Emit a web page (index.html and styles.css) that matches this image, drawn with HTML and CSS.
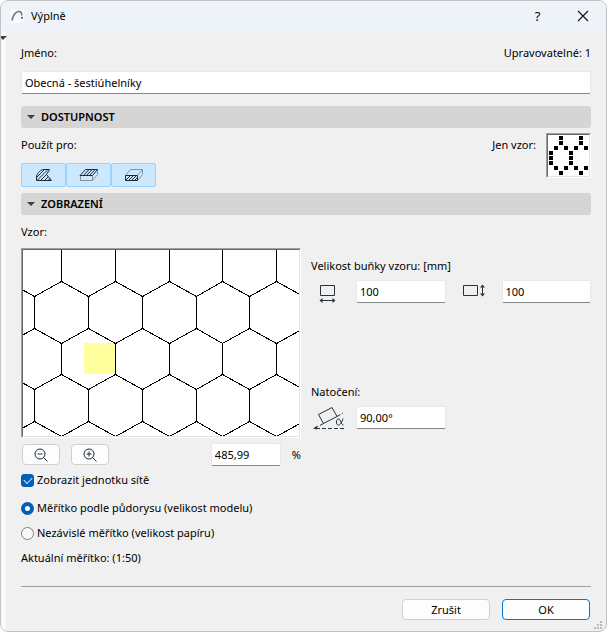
FILE: index.html
```html
<!DOCTYPE html>
<html lang="cs">
<head>
<meta charset="utf-8">
<title>Výplně</title>
<link rel="stylesheet" href="styles.css">
</head>
<body>
<div class="dialog">
  <header class="titlebar">
    <svg class="app-icon" width="14" height="14" viewBox="0 0 14 14" aria-hidden="true"><rect width="14" height="14" rx="2" fill="#fafafa"/><path d="M2 11.500C3 6.500 5.500 3 8.500 2.500c2.200-.3 3.200 1.200 3.300 4" fill="none" stroke="#73737f" stroke-width="1.600"/><circle cx="12" cy="8.800" r="1" fill="#4a4a52"/></svg>
    <h1 class="title">Výplně</h1>
    <button class="title-button help" type="button" aria-label="Nápověda">?</button>
    <button class="title-button" type="button" aria-label="Zavřít"><svg width="12" height="12" viewBox="0 0 12 12"><path d="M1 1l10 10M11 1L1 11" stroke="#111" stroke-width="1.100"/></svg></button>
  </header>
  <div class="body">
    <div class="rail"><span class="arrow rail-arrow"></span></div>
    <form class="content">
      <div class="name-row"><label for="name">Jméno:</label><span>Upravovatelné: 1</span></div>
      <input class="field" id="name" type="text" value="Obecná - šestiúhelníky">

      <button class="section" type="button"><span class="arrow"></span>DOSTUPNOST</button>
      <div class="availability">
        <div class="use-for">
          <span>Použít pro:</span>
          <div class="toggles">
            <button type="button" class="toggle" aria-label="Kreslené výplně"><svg width="18" height="14" viewBox="0 0 18 14"><path d="M1.500 12.500V8C3 4.500 5.500 1.500 9 1.500h5.500L11.500 6.500l5 6z" fill="none" stroke="#1d2b36"/><path d="M2 9l7-7M2 12.500l10.500-10.500M5.500 12.500l6-6M9.500 12.500l3.500-3.500M13 12.500l2-2" stroke="#1d2b36"/></svg></button>
            <button type="button" class="toggle" aria-label="Povrchové výplně"><svg width="20" height="14" viewBox="0 0 20 14"><path d="M1.500 7.500v5h12v-5M13.500 12.500l5-6v-5" fill="none" stroke="#87939b"/><path d="M1 7.500l5.500-6h12l-5 6zM4.500 7.500l5.500-6M7.500 7.500l5.500-6M10.500 7.500l5.500-6" fill="none" stroke="#1d2b36"/></svg></button>
            <button type="button" class="toggle" aria-label="Výplně řezu"><svg width="20" height="14" viewBox="0 0 20 14"><path d="M1.500 7.500l5-6h12l-5 6M13.500 12.500l5-6v-5" fill="none" stroke="#87939b"/><path d="M1.500 7.500h12v5h-12zM2 12l4-4M5 12l4-4M8 12l4-4M11 12l2-2" fill="none" stroke="#1d2b36"/></svg></button>
          </div>
        </div>
        <span>Jen vzor:</span>
        <div class="sunken swatch">
          <svg width="41" height="41" viewBox="0 0 41 41" shape-rendering="crispEdges" role="img" aria-label="Náhled vzoru"><path d="M11 1h4v4h-4zM31 1h4v4h-4zM11 6h4v4h-4zM31 6h4v4h-4zM6 11h4v4h-4zM16 11h4v4h-4zM26 11h4v4h-4zM36 11h4v4h-4zM1 16h4v4h-4zM21 16h4v4h-4zM1 21h4v4h-4zM21 21h4v4h-4zM1 26h4v4h-4zM21 26h4v4h-4zM6 31h4v4h-4zM16 31h4v4h-4zM26 31h4v4h-4zM36 31h4v4h-4zM11 36h4v4h-4zM31 36h4v4h-4z"/></svg>
        </div>
      </div>

      <button class="section" type="button"><span class="arrow"></span>ZOBRAZENÍ</button>
      <div class="display">
        <div class="pattern">
          <span class="pattern-label">Vzor:</span>
          <div class="sunken">
            <svg width="276" height="186" viewBox="0 0 276 186" shape-rendering="crispEdges" role="img" aria-label="Vzor šestiúhelníky">
              <rect x="61" y="93" width="31" height="31" fill="#ffff9e"/>
              <g fill="none" stroke="#000">
                <path d="M-15.500 31.500l27 15 27-15 27 15 27-15 27 15 27-15 27 15 26-15 27 15 27-15 27 15"/>
                <path d="M-15.500 93.500l27-15 27 15 27-15 27 15 27-15 27 15 27-15 26 15 27-15 27 15 27-15"/>
                <path d="M-15.500 124.500l27 15 27-15 27 15 27-15 27 15 27-15 27 15 26-15 27 15 27-15 27 15"/>
                <path d="M-15.500 186.500l27-15 27 15 27-15 27 15 27-15 27 15 27-15 26 15 27-15 27 15 27-15"/>
                <path d="M38.500 0v32M92.500 0v32M146.500 0v32M199.500 0v32M253.500 0v32M38.500 93v32M92.500 93v32M146.500 93v32M199.500 93v32M253.500 93v32"/>
                <path d="M11.500 46v33M65.500 46v33M119.500 46v33M173.500 46v33M226.500 46v33M11.500 139v33M65.500 139v33M119.500 139v33M173.500 139v33M226.500 139v33"/>
              </g>
            </svg>
          </div>
          <div class="zoom-row">
            <button class="button zoom" type="button" aria-label="Oddálit"><svg width="14" height="14" viewBox="0 0 14 14" fill="none" stroke="#1d2b36"><circle cx="6" cy="6" r="5"/><path d="M3.500 6h5M9.500 9.500l4 4"/></svg></button>
            <button class="button zoom" type="button" aria-label="Přiblížit"><svg width="14" height="14" viewBox="0 0 14 14" fill="none" stroke="#1d2b36"><circle cx="6" cy="6" r="5"/><path d="M3.500 6h5M6 3.500v5M9.500 9.500l4 4"/></svg></button>
            <input class="field percent" id="percent" type="text" value="485,99">
            <label for="percent">%</label>
          </div>
        </div>
        <div class="cell">
          <span>Velikost buňky vzoru: [mm]</span>
          <div class="cell-row">
            <svg width="32" height="24" viewBox="0 0 32 24" fill="none" stroke="#26333d" aria-hidden="true"><path d="M9.500 5.500h14v10h-14zM9 20.500h15"/><path d="M8.500 20.500l3-2.500v5zM24.500 20.500l-3-2.500v5z" fill="#26333d" stroke="none"/></svg>
            <input class="field" type="text" value="100" aria-label="Šířka buňky">
            <svg class="height-icon" width="24" height="24" viewBox="0 0 24 24" fill="none" stroke="#26333d" aria-hidden="true"><path d="M1.500 5.500h14v10h-14zM20.500 6v9"/><path d="M20.500 4.500l-2.500 3h5zM20.500 16.500l-2.500-3h5z" fill="#26333d" stroke="none"/></svg>
            <input class="field" type="text" value="100" aria-label="Výška buňky">
          </div>
          <label class="angle-label" for="angle">Natočení:</label>
          <div class="cell-row">
            <svg width="36" height="24" viewBox="0 0 36 24" fill="none" stroke="#26333d" aria-hidden="true"><path d="M7.500 8.500L21 1.500l5 9-13.500 7z"/><path d="M12.500 17.500L4 22M26 10.500l6-3.500" stroke-dasharray="4 2"/><path d="M5 22.500h29" stroke-dasharray="4 2"/><path d="M2 22.500l4-2.500v3.500z" fill="#26333d" stroke="none"/><path d="M32 12.500c-1 3.500-2.500 6.500-4.500 6.500-1.500 0-2-1.200-2-3s.7-3 2-3c2.500 0 2.200 6 5 6"/></svg>
            <input class="field" id="angle" type="text" value="90,00°">
          </div>
        </div>
      </div>

      <div class="options">
        <label class="option check-option"><input class="check" type="checkbox" checked>Zobrazit jednotku sítě</label>
        <label class="option"><input class="radio" type="radio" name="scale" checked>Měřítko podle půdorysu (velikost modelu)</label>
        <label class="option"><input class="radio" type="radio" name="scale">Nezávislé měřítko (velikost papíru)</label>
        <span class="option">Aktuální měřítko: (1:50)</span>
      </div>

      <footer class="actions">
        <button class="button action" type="button">Zrušit</button>
        <button class="button action primary" type="submit">OK</button>
      </footer>
    </form>
  </div>
  <svg class="grip" width="8" height="8" viewBox="0 0 8 8" shape-rendering="crispEdges" aria-hidden="true"><path d="M6 0h2v2h-2zM3 3h2v2h-2zM6 3h2v2h-2zM0 6h2v2h-2zM3 6h2v2h-2zM6 6h2v2h-2z" fill="#b8b8b8"/></svg>
</div>
</body>
</html>
```

FILE: styles.css
```css
* {
  box-sizing: border-box;
}

body {
  margin: 0;
  background: #fff;
  color: #000;
  font: 11px/16px "Noto Sans", sans-serif;
}

button,
input {
  margin: 0;
  color: inherit;
  font: inherit;
}

svg {
  display: block;
  flex: none;
}

.dialog {
  position: relative;
  display: flex;
  flex-direction: column;
  min-height: 100vh;
  overflow: hidden;
  border: 1px solid #c2c2c2;
  border-radius: 8px;
  background: #f0f0f0;
}

.titlebar {
  display: flex;
  align-items: center;
  height: 30px;
  padding: 0 1px 0 9px;
  background: #eef3f9;
}

.title {
  flex: 1;
  margin: 0 0 0 7px;
  font-size: 11px;
  font-weight: 400;
}

.title-button {
  display: flex;
  align-items: center;
  justify-content: center;
  width: 45px;
  height: 30px;
  padding: 0;
  border: 0;
  background: none;
}

.help {
  font-size: 13px;
}

.body {
  display: flex;
  flex: 1;
}

.rail {
  width: 5px;
  padding-top: 5px;
  background: #f9f9f9;
}

.arrow {
  width: 0;
  height: 0;
  border: 4px solid transparent;
  border-top-color: #404040;
  border-bottom: 0;
}

.rail-arrow {
  display: block;
  margin-left: -2px;
}

.content {
  display: flex;
  flex: 1;
  flex-direction: column;
  padding: 14px 15px 11px;
}

.name-row {
  display: flex;
  justify-content: space-between;
}

.field {
  width: 100%;
  min-width: 0;
  height: 23px;
  padding: 0 3px;
  border: 1px solid #e8e8e8;
  border-bottom-color: #868686;
  border-radius: 2px;
  background: #fff;
  outline: 0;
}

.name-row + .field {
  margin-top: 10px;
}

.section {
  display: flex;
  align-items: center;
  gap: 6px;
  height: 22px;
  padding: 0 6px;
  border: 0;
  border-radius: 3px;
  background: #d5d5d5;
  font-weight: 600;
}

.field + .section {
  margin-top: 12px;
}

.availability {
  display: flex;
  align-items: flex-start;
  gap: 10px;
  padding: 5px 0 6px;
}

.availability > span,
.use-for > span {
  padding-top: 4px;
}

.use-for {
  display: flex;
  flex: 1;
  flex-direction: column;
  gap: 10px;
}

.toggles {
  display: flex;
}

.toggle {
  display: flex;
  align-items: center;
  justify-content: center;
  width: 45px;
  height: 24px;
  padding: 0;
  border: 1px solid #99d1ff;
  border-radius: 2px;
  background: #cce8ff;
}

.sunken {
  width: fit-content;
  border: 1px solid;
  border-color: #a0a0a0 #fff #fff #a0a0a0;
}

.sunken svg {
  box-sizing: content-box;
  border: 1px solid;
  border-color: #696969 #e3e3e3 #e3e3e3 #696969;
  background: #fff;
}

.availability .swatch {
  margin-bottom: 4px;
}

.display {
  display: flex;
  gap: 10px;
  padding-top: 9px;
}

.pattern {
  width: 280px;
}

.pattern-label {
  display: block;
  margin-bottom: 8px;
}

.zoom-row {
  display: flex;
  align-items: center;
  gap: 11px;
  margin-top: 5px;
  padding-left: 1px;
}

.button {
  display: flex;
  align-items: center;
  justify-content: center;
  height: 21px;
  padding: 0;
  border: 1px solid #d0d0d0;
  border-radius: 4px;
  background: #fdfdfd;
}

.zoom {
  width: 38px;
}

.percent {
  width: 70px;
  margin-left: auto;
}

.cell {
  flex: 1;
  padding-top: 34px;
}

.cell-row {
  display: grid;
  grid-template-columns: 45px 1fr 56px 1fr;
  margin-top: 6px;
}

.height-icon {
  justify-self: center;
}

.angle-label {
  display: block;
  margin-top: 80px;
}

.options {
  display: flex;
  flex-direction: column;
  gap: 9px;
  padding-top: 6px;
}

.option {
  display: flex;
  align-items: center;
  gap: 3px;
}

.check-option {
  margin-bottom: 3px;
}

.check,
.radio {
  width: 13px;
  height: 13px;
  appearance: none;
  border: 1px solid #808080;
  background: #f8f8f8;
}

.check {
  display: flex;
  align-items: center;
  justify-content: center;
  border-radius: 3px;
}

.check:checked {
  border-color: #005fb8;
  background: #005fb8;
}

.check:checked::after {
  content: "";
  width: 7px;
  height: 4px;
  margin-bottom: 2px;
  border: solid #d5e8f8;
  border-width: 0 0 1px 1px;
  transform: rotate(-45deg);
}

.radio {
  border-radius: 50%;
}

.radio:checked {
  border: 4px solid #005fb8;
  background: #fff;
}

.actions {
  display: flex;
  justify-content: flex-end;
  gap: 12px;
  margin-top: auto;
  padding: 12px 1px 0 0;
  border-top: 1px solid #a0a0a0;
}

.action {
  width: 88px;
}

.primary {
  border-color: #0078d4;
}

.grip {
  position: absolute;
  right: 4px;
  bottom: 2px;
}
```
